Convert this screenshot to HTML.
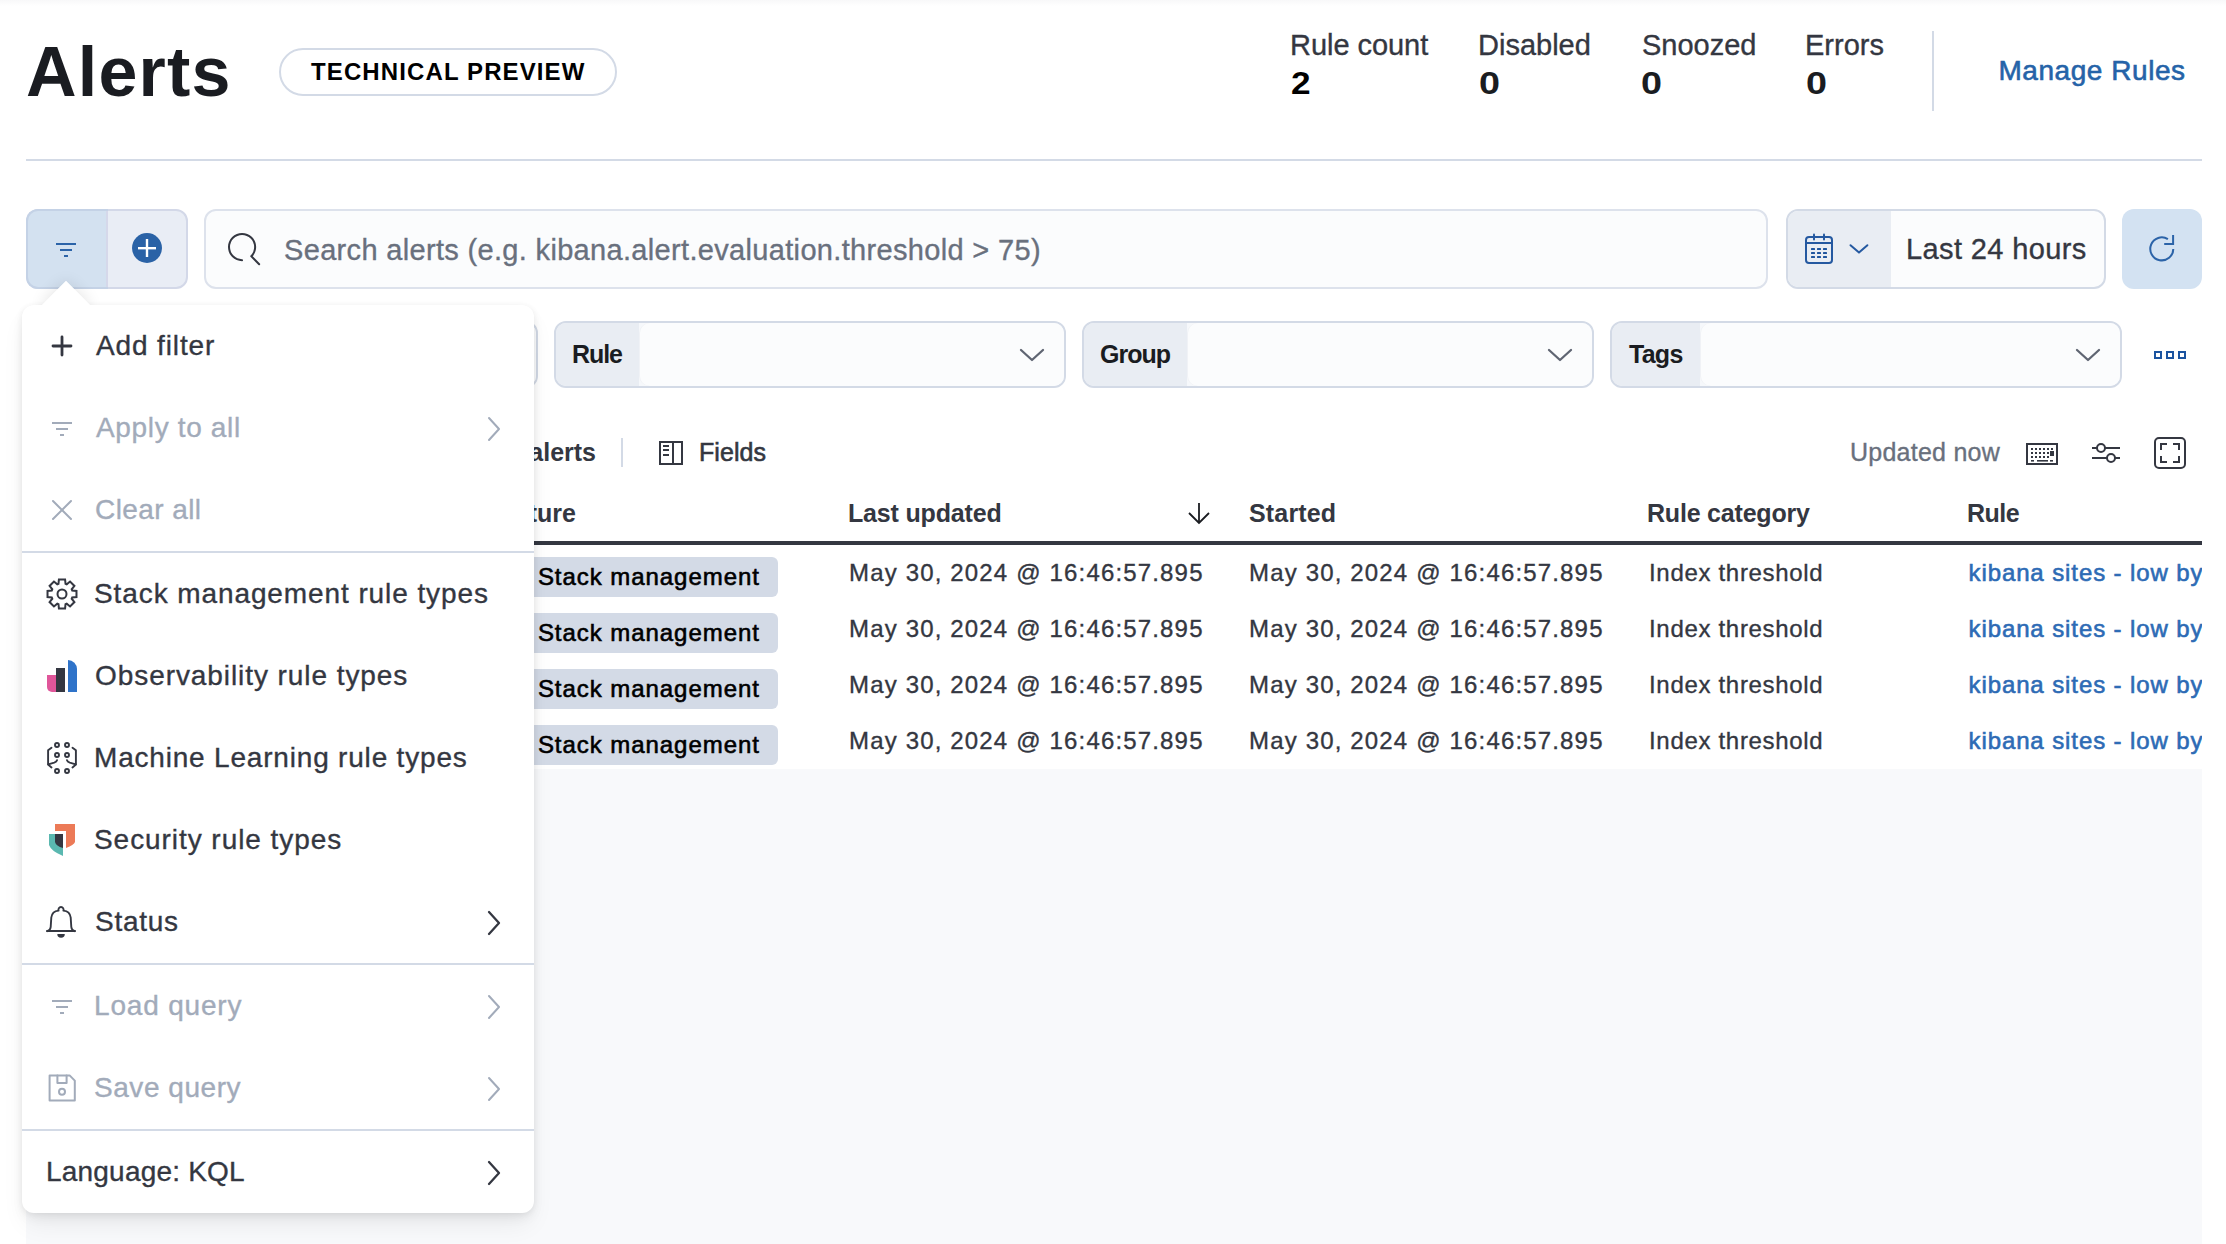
<!DOCTYPE html>
<html><head><meta charset="utf-8">
<style>
html,body{margin:0;padding:0;background:#fff;}
body{width:2226px;height:1244px;position:relative;overflow:hidden;font-family:"Liberation Sans",sans-serif;}
.t{position:absolute;line-height:1;white-space:nowrap;}
.a{position:absolute;box-sizing:border-box;}
svg{position:absolute;overflow:visible;}
</style></head><body>
<!-- top hairline shadow -->
<div class="a" style="left:0;top:0;width:2226px;height:6px;background:linear-gradient(#f8f8f9,#fff);"></div>
<!-- header -->
<div class="a" style="left:279px;top:48px;width:338px;height:48px;border:2px solid #d3dae6;border-radius:24px;"></div>
<div class="a" style="left:1932px;top:31px;width:2px;height:80px;background:#d3dae6;"></div>
<div class="a" style="left:26px;top:159px;width:2176px;height:2px;background:#d3dae6;"></div>

<!-- toolbar: filter button group -->
<div class="a" style="left:26px;top:209px;width:162px;height:80px;border:2px solid #d3d8e8;border-radius:12px;background:#e9edf5;"></div>
<div class="a" style="left:26px;top:209px;width:82px;height:80px;border:2px solid #c4d2e6;border-right:none;border-radius:12px 0 0 12px;background:#d3e1f0;"></div>
<div class="a" style="left:106px;top:211px;width:2px;height:76px;background:#d5d8ea;"></div>
<svg style="left:0;top:0" width="1" height="1">
  <rect x="56" y="243" width="20" height="2" fill="#2b63a8"/>
  <rect x="60" y="249" width="12" height="2" fill="#2b63a8"/>
  <rect x="64" y="255" width="4" height="2" fill="#2b63a8"/>
  <circle cx="147" cy="248" r="15" fill="#2a62a6"/>
  <rect x="138" y="247" width="18" height="2.4" fill="#fff"/>
  <rect x="145.8" y="239" width="2.4" height="18" fill="#fff"/>
</svg>

<!-- search -->
<div class="a" style="left:204px;top:209px;width:1564px;height:80px;border:2px solid #dde2ec;border-radius:12px;background:#fbfcfd;"></div>
<svg style="left:227.5px;top:233px" width="32.2" height="32.2" viewBox="0 0 16 16"><path fill="#343741" d="M11.271 11.978l3.872 3.873a.502.502 0 0 0 .708 0 .502.502 0 0 0 0-.708l-3.565-3.564c2.38-2.747 2.267-6.923-.342-9.532-2.73-2.73-7.17-2.73-9.898 0-2.728 2.729-2.728 7.17 0 9.9a6.955 6.955 0 0 0 4.949 2.05.5.5 0 0 0 0-1 5.96 5.96 0 0 1-4.242-1.757 6.01 6.01 0 0 1 0-8.486c2.337-2.34 6.143-2.34 8.484 0a6.01 6.01 0 0 1 0 8.486.5.5 0 0 0 .034.738z"/></svg>

<!-- date picker -->
<div class="a" style="left:1786px;top:209px;width:320px;height:80px;border:2px solid #d3dae6;border-radius:12px;background:#fbfcfd;overflow:hidden;">
  <div class="a" style="left:0;top:0;width:103px;height:76px;background:#e9edf3;"></div>
</div>
<svg style="left:0;top:0" width="1" height="1">
  <g fill="none" stroke="#2559a0" stroke-width="2" stroke-linecap="round">
    <rect x="1806" y="237" width="26" height="26" rx="3"/>
    <line x1="1806" y1="243" x2="1832" y2="243"/>
    <line x1="1814" y1="234.5" x2="1814" y2="239.5"/>
    <line x1="1824" y1="234.5" x2="1824" y2="239.5"/>
    <polyline stroke-linejoin="round" points="1850.5,245.2 1859,252.6 1867.4,245.2"/>
  </g>
  <g fill="#1f559e">
    <rect x="1811" y="248" width="4" height="2" rx="0.5"/><rect x="1817" y="248" width="4" height="2" rx="0.5"/><rect x="1823" y="248" width="4" height="2" rx="0.5"/>
    <rect x="1811" y="252" width="4" height="2" rx="0.5"/><rect x="1817" y="252" width="4" height="2" rx="0.5"/><rect x="1823" y="252" width="4" height="2" rx="0.5"/>
    <rect x="1811" y="256" width="4" height="2" rx="0.5"/><rect x="1817" y="256" width="4" height="2" rx="0.5"/><rect x="1823" y="256" width="4" height="2" rx="0.5"/>
  </g>
</svg>
<!-- refresh -->
<div class="a" style="left:2122px;top:209px;width:80px;height:80px;border-radius:12px;background:#d3e2f2;"></div>
<svg style="left:0;top:0" width="1" height="1">
  <g fill="none" stroke="#2b63a8" stroke-width="2">
    <path d="M2167.9 239.1 A11.5 11.5 0 1 0 2173.3 248.9"/>
    <polyline points="2173.1,235 2173.1,244.1 2164.2,244.1"/>
  </g>
</svg>

<!-- filter controls -->
<div class="a" style="left:26px;top:321px;width:512px;height:67px;border:2px solid #d3dae6;border-radius:12px;background:#f6f8fb;overflow:hidden;"><div class="a" style="left:0;top:0;width:100px;bottom:0;background:#e9edf3;"></div><div class="a" style="left:100px;top:0;right:0;bottom:0;background:#fbfcfd;border-radius:10px 0 0 10px;box-shadow:inset 1px 0 0 #f0f2f6;"></div></div>
<div class="a" style="left:554px;top:321px;width:512px;height:67px;border:2px solid #d3dae6;border-radius:12px;background:#f6f8fb;overflow:hidden;"><div class="a" style="left:0;top:0;width:83px;bottom:0;background:#e9edf3;"></div><div class="a" style="left:83px;top:0;right:0;bottom:0;background:#fbfcfd;border-radius:10px 0 0 10px;box-shadow:inset 1px 0 0 #f0f2f6;"></div></div>
<div class="a" style="left:1082px;top:321px;width:512px;height:67px;border:2px solid #d3dae6;border-radius:12px;background:#f6f8fb;overflow:hidden;"><div class="a" style="left:0;top:0;width:103px;bottom:0;background:#e9edf3;"></div><div class="a" style="left:103px;top:0;right:0;bottom:0;background:#fbfcfd;border-radius:10px 0 0 10px;box-shadow:inset 1px 0 0 #f0f2f6;"></div></div>
<div class="a" style="left:1610px;top:321px;width:512px;height:67px;border:2px solid #d3dae6;border-radius:12px;background:#f6f8fb;overflow:hidden;"><div class="a" style="left:0;top:0;width:88px;bottom:0;background:#e9edf3;"></div><div class="a" style="left:88px;top:0;right:0;bottom:0;background:#fbfcfd;border-radius:10px 0 0 10px;box-shadow:inset 1px 0 0 #f0f2f6;"></div></div>
<svg style="left:0;top:0" width="1" height="1">
  <g fill="none" stroke="#5f6572" stroke-width="2.3" stroke-linecap="round" stroke-linejoin="round">
    <polyline points="1021,350 1032,360 1043,350"/>
    <polyline points="1549,350 1560,360 1571,350"/>
    <polyline points="2077,350 2088,360 2099,350"/>
  </g>
  <g fill="none" stroke="#1b54a0" stroke-width="2">
    <rect x="2155" y="352" width="6" height="6"/>
    <rect x="2167" y="352" width="6" height="6"/>
    <rect x="2179" y="352" width="6" height="6"/>
  </g>
</svg>

<!-- grid toolbar -->
<div class="a" style="left:621px;top:438px;width:2px;height:29px;background:#d3dae6;"></div>
<svg style="left:0;top:0" width="1" height="1">
  <g fill="none" stroke="#343741" stroke-width="2">
    <rect x="660" y="442" width="22" height="22"/>
    <line x1="673" y1="442" x2="673" y2="464"/>
    <line x1="663" y1="446" x2="669" y2="446"/>
    <line x1="663" y1="450" x2="669" y2="450"/>
    <line x1="663" y1="455" x2="669" y2="455"/>
    <!-- keyboard -->
    <rect x="2027" y="444" width="30" height="20"/>
    <!-- sliders -->
    <line x1="2092" y1="448" x2="2097" y2="448"/><line x1="2105" y1="448" x2="2120" y2="448"/>
    <circle cx="2101" cy="448" r="4"/>
    <line x1="2092" y1="458" x2="2107" y2="458"/><line x1="2115" y1="458" x2="2120" y2="458"/>
    <circle cx="2111" cy="458" r="4"/>
    <!-- fullscreen -->
    <rect x="2155" y="438" width="30" height="30" rx="4"/>
    <polyline points="2161,450 2161,444 2167,444"/>
    <polyline points="2173,444 2179,444 2179,450"/>
    <polyline points="2161,456 2161,462 2167,462"/>
    <polyline points="2173,462 2179,462 2179,456"/>
  </g>
  <g fill="#343741">
    <rect x="2031" y="448" width="2" height="2"/><rect x="2035" y="448" width="2" height="2"/><rect x="2039" y="448" width="2" height="2"/><rect x="2043" y="448" width="2" height="2"/><rect x="2047" y="448" width="2" height="2"/><rect x="2051" y="448" width="2" height="2"/>
    <rect x="2031" y="452" width="2" height="2"/><rect x="2035" y="452" width="2" height="2"/><rect x="2039" y="452" width="2" height="2"/><rect x="2043" y="452" width="2" height="2"/><rect x="2047" y="452" width="2" height="2"/><rect x="2050" y="451" width="4" height="5"/>
    <rect x="2031" y="456" width="2" height="2"/><rect x="2035" y="456" width="2" height="2"/><rect x="2039" y="456" width="2" height="2"/><rect x="2043" y="456" width="2" height="2"/><rect x="2047" y="456" width="2" height="2"/>
    <rect x="2031" y="460" width="3" height="1.6"/><rect x="2037" y="460" width="11" height="1.6"/><rect x="2050" y="460" width="3" height="1.6"/>
  </g>
</svg>

<!-- header row -->
<svg style="left:0;top:0" width="1" height="1">
  <g fill="none" stroke="#1a1c21" stroke-width="1.8">
    <line x1="1199" y1="503" x2="1199" y2="522"/>
    <polyline points="1189,513 1199,523 1209,513"/>
  </g>
</svg>
<div class="a" style="left:26px;top:541px;width:2176px;height:4px;background:#343741;"></div>

<!-- badges -->
<div class="a" style="left:520px;top:557px;width:258px;height:40px;border-radius:6px;background:#d3dae6;"></div>
<div class="a" style="left:520px;top:613px;width:258px;height:40px;border-radius:6px;background:#d3dae6;"></div>
<div class="a" style="left:520px;top:669px;width:258px;height:40px;border-radius:6px;background:#d3dae6;"></div>
<div class="a" style="left:520px;top:725px;width:258px;height:40px;border-radius:6px;background:#d3dae6;"></div>

<!-- link cells -->
<div class="a" style="left:1960px;top:545px;width:242px;height:224px;overflow:hidden;">
  <div class="t" style="left:8.5px;top:16.1px;font-size:24px;font-weight:400;-webkit-text-stroke:0.6px #2d6bb5;letter-spacing:0.9px;color:#2d6bb5;">kibana sites - low bytes</div>
  <div class="t" style="left:8.5px;top:72.1px;font-size:24px;font-weight:400;-webkit-text-stroke:0.6px #2d6bb5;letter-spacing:0.9px;color:#2d6bb5;">kibana sites - low bytes</div>
  <div class="t" style="left:8.5px;top:128.1px;font-size:24px;font-weight:400;-webkit-text-stroke:0.6px #2d6bb5;letter-spacing:0.9px;color:#2d6bb5;">kibana sites - low bytes</div>
  <div class="t" style="left:8.5px;top:184.1px;font-size:24px;font-weight:400;-webkit-text-stroke:0.6px #2d6bb5;letter-spacing:0.9px;color:#2d6bb5;">kibana sites - low bytes</div>
</div>

<!-- empty grid area -->
<div class="a" style="left:26px;top:769px;width:2176px;height:475px;background:#f8f9fb;"></div>

<div class="t" id="t0" style="top:36.7px;font-size:70px;font-weight:700;color:#1a1c21;letter-spacing:1.200px;left:26.0px;">Alerts</div>
<div class="t" id="t1" style="top:59.7px;font-size:24px;font-weight:700;color:#000000;letter-spacing:1.112px;left:311.0px;">TECHNICAL PREVIEW</div>
<div class="t" id="t2" style="top:30.7px;font-size:29px;font-weight:400;-webkit-text-stroke:0.35px #343741;color:#343741;letter-spacing:-0.044px;left:1290.0px;">Rule count</div>
<div class="t" id="t3" style="top:30.7px;font-size:29px;font-weight:400;-webkit-text-stroke:0.35px #343741;color:#343741;left:1478.0px;">Disabled</div>
<div class="t" id="t4" style="top:30.7px;font-size:29px;font-weight:400;-webkit-text-stroke:0.35px #343741;color:#343741;left:1642.0px;">Snoozed</div>
<div class="t" id="t5" style="top:30.7px;font-size:29px;font-weight:400;-webkit-text-stroke:0.35px #343741;color:#343741;left:1805.0px;">Errors</div>
<div class="t" id="t6" style="top:66.6px;font-size:32px;font-weight:700;color:#000000;left:1291.0px;transform:scaleX(1.1);transform-origin:left;">2</div>
<div class="t" id="t7" style="top:66.6px;font-size:32px;font-weight:700;color:#1a1c21;left:1479.0px;transform:scaleX(1.18);transform-origin:left;">0</div>
<div class="t" id="t8" style="top:66.6px;font-size:32px;font-weight:700;color:#1a1c21;left:1641.0px;transform:scaleX(1.18);transform-origin:left;">0</div>
<div class="t" id="t9" style="top:66.6px;font-size:32px;font-weight:700;color:#1a1c21;left:1806.0px;transform:scaleX(1.18);transform-origin:left;">0</div>
<div class="t" id="t10" style="top:57.3px;font-size:28px;font-weight:400;-webkit-text-stroke:0.6px #2563a8;color:#2563a8;letter-spacing:0.545px;left:1998.5px;">Manage Rules</div>
<div class="t" id="t11" style="top:235.5px;font-size:29px;font-weight:400;-webkit-text-stroke:0.35px #69707d;color:#69707d;letter-spacing:0.328px;left:284.0px;">Search alerts (e.g. kibana.alert.evaluation.threshold &gt; 75)</div>
<div class="t" id="t12" style="top:235.1px;font-size:29px;font-weight:400;-webkit-text-stroke:0.35px #343741;color:#343741;letter-spacing:0.383px;left:1906.0px;">Last 24 hours</div>
<div class="t" id="t13" style="top:342.1px;font-size:25px;font-weight:700;color:#1a1c21;left:45.0px;">Status</div>
<div class="t" id="t14" style="top:342.1px;font-size:25px;font-weight:700;color:#1a1c21;letter-spacing:-1.067px;left:572.0px;">Rule</div>
<div class="t" id="t15" style="top:342.1px;font-size:25px;font-weight:700;color:#1a1c21;letter-spacing:-1.000px;left:1100.0px;">Group</div>
<div class="t" id="t16" style="top:342.1px;font-size:25px;font-weight:700;color:#1a1c21;letter-spacing:-0.733px;left:1629.0px;">Tags</div>
<div class="t" id="t17" style="top:439.8px;font-size:25px;font-weight:700;color:#343741;right:1630.0px;">4 alerts</div>
<div class="t" id="t18" style="top:439.8px;font-size:25px;font-weight:400;-webkit-text-stroke:0.6px #343741;color:#343741;letter-spacing:0.080px;left:699.0px;">Fields</div>
<div class="t" id="t19" style="top:439.5px;font-size:25px;font-weight:400;-webkit-text-stroke:0.35px #69707d;color:#69707d;letter-spacing:0.240px;left:1850.0px;">Updated now</div>
<div class="t" id="t20" style="top:500.8px;font-size:25px;font-weight:700;color:#343741;right:1650.0px;">Feature</div>
<div class="t" id="t21" style="top:500.8px;font-size:25px;font-weight:700;color:#343741;letter-spacing:-0.173px;left:848.0px;">Last updated</div>
<div class="t" id="t22" style="top:500.8px;font-size:25px;font-weight:700;color:#343741;letter-spacing:0.167px;left:1249.0px;">Started</div>
<div class="t" id="t23" style="top:500.8px;font-size:25px;font-weight:700;color:#343741;letter-spacing:-0.200px;left:1647.0px;">Rule category</div>
<div class="t" id="t24" style="top:500.8px;font-size:25px;font-weight:700;color:#343741;letter-spacing:-0.500px;left:1967.0px;">Rule</div>
<div class="t" id="t25" style="top:560.9px;font-size:24px;font-weight:400;-webkit-text-stroke:0.35px #343741;color:#343741;letter-spacing:1.162px;left:849.0px;">May 30, 2024 @ 16:46:57.895</div>
<div class="t" id="t26" style="top:560.9px;font-size:24px;font-weight:400;-webkit-text-stroke:0.35px #343741;color:#343741;letter-spacing:1.162px;left:1249.0px;">May 30, 2024 @ 16:46:57.895</div>
<div class="t" id="t27" style="top:560.9px;font-size:24px;font-weight:400;-webkit-text-stroke:0.35px #343741;color:#343741;letter-spacing:0.686px;left:1649.0px;">Index threshold</div>
<div class="t" id="t28" style="top:564.7px;font-size:24px;font-weight:400;-webkit-text-stroke:0.6px #000000;color:#000000;left:537.9px;letter-spacing:0.95px;">Stack management</div>
<div class="t" id="t29" style="top:616.9px;font-size:24px;font-weight:400;-webkit-text-stroke:0.35px #343741;color:#343741;letter-spacing:1.162px;left:849.0px;">May 30, 2024 @ 16:46:57.895</div>
<div class="t" id="t30" style="top:616.9px;font-size:24px;font-weight:400;-webkit-text-stroke:0.35px #343741;color:#343741;letter-spacing:1.162px;left:1249.0px;">May 30, 2024 @ 16:46:57.895</div>
<div class="t" id="t31" style="top:616.9px;font-size:24px;font-weight:400;-webkit-text-stroke:0.35px #343741;color:#343741;letter-spacing:0.686px;left:1649.0px;">Index threshold</div>
<div class="t" id="t32" style="top:620.7px;font-size:24px;font-weight:400;-webkit-text-stroke:0.6px #000000;color:#000000;left:537.9px;letter-spacing:0.95px;">Stack management</div>
<div class="t" id="t33" style="top:672.9px;font-size:24px;font-weight:400;-webkit-text-stroke:0.35px #343741;color:#343741;letter-spacing:1.162px;left:849.0px;">May 30, 2024 @ 16:46:57.895</div>
<div class="t" id="t34" style="top:672.9px;font-size:24px;font-weight:400;-webkit-text-stroke:0.35px #343741;color:#343741;letter-spacing:1.162px;left:1249.0px;">May 30, 2024 @ 16:46:57.895</div>
<div class="t" id="t35" style="top:672.9px;font-size:24px;font-weight:400;-webkit-text-stroke:0.35px #343741;color:#343741;letter-spacing:0.686px;left:1649.0px;">Index threshold</div>
<div class="t" id="t36" style="top:676.7px;font-size:24px;font-weight:400;-webkit-text-stroke:0.6px #000000;color:#000000;left:537.9px;letter-spacing:0.95px;">Stack management</div>
<div class="t" id="t37" style="top:728.9px;font-size:24px;font-weight:400;-webkit-text-stroke:0.35px #343741;color:#343741;letter-spacing:1.162px;left:849.0px;">May 30, 2024 @ 16:46:57.895</div>
<div class="t" id="t38" style="top:728.9px;font-size:24px;font-weight:400;-webkit-text-stroke:0.35px #343741;color:#343741;letter-spacing:1.162px;left:1249.0px;">May 30, 2024 @ 16:46:57.895</div>
<div class="t" id="t39" style="top:728.9px;font-size:24px;font-weight:400;-webkit-text-stroke:0.35px #343741;color:#343741;letter-spacing:0.686px;left:1649.0px;">Index threshold</div>
<div class="t" id="t40" style="top:732.7px;font-size:24px;font-weight:400;-webkit-text-stroke:0.6px #000000;color:#000000;left:537.9px;letter-spacing:0.95px;">Stack management</div>

<!-- popover -->
<div class="a" style="left:49px;top:288px;width:34px;height:34px;transform:rotate(45deg);background:#fff;box-shadow:0 0 16px rgba(0,0,0,0.12);"></div>
<div class="a" style="left:22px;top:305px;width:512px;height:908px;background:#fff;border-radius:12px;box-shadow:0 1px 6px rgba(0,0,0,0.06),0 5px 12px rgba(0,0,0,0.05),0 14px 26px -4px rgba(0,0,0,0.07);"></div>
<svg style="left:0;top:0" width="1" height="1">
  <polygon points="41,306 66,281 91,306" fill="#fff"/>
</svg>
<div class="a" style="left:22px;top:551px;width:512px;height:2px;background:#d3dae6;"></div>
<div class="a" style="left:22px;top:963px;width:512px;height:2px;background:#d3dae6;"></div>
<div class="a" style="left:22px;top:1129px;width:512px;height:2px;background:#d3dae6;"></div>
<svg style="left:0;top:0" width="1" height="1">
  <!-- plus -->
  <g stroke="#343741" stroke-width="2.4" fill="none">
    <line x1="53" y1="346" x2="71" y2="346" stroke-linecap="round" stroke-width="2.8"/><line x1="62" y1="337" x2="62" y2="355" stroke-linecap="round" stroke-width="2.8"/>
  </g>
  <!-- filter disabled -->
  <g fill="#a2abba">
    <rect x="52" y="422" width="20" height="2"/><rect x="56" y="428" width="12" height="2"/><rect x="60" y="434" width="4" height="2"/>
    <rect x="52" y="1000" width="20" height="2"/><rect x="56" y="1006" width="12" height="2"/><rect x="60" y="1012" width="4" height="2"/>
  </g>
  <g stroke="#a2abba" stroke-width="2" fill="none" stroke-linecap="round" stroke-linejoin="round">
    <line x1="53" y1="501" x2="71" y2="519"/><line x1="71" y1="501" x2="53" y2="519"/>
    <polyline points="489,418 499,429 489,440"/>
    <polyline points="489,996 499,1007 489,1018"/>
    <polyline points="489,1078 499,1089 489,1100"/>
    <!-- floppy -->
    <path stroke-linejoin="round" d="M49.6 1075.4 H69.6 L74.8 1080.6 V1100.6 H49.6 Z"/>
    <path stroke-linejoin="round" d="M57.4 1075.4 V1083 H66.6 V1075.4"/>
    <circle cx="62" cy="1091.8" r="3"/>
  </g>
  <g stroke="#343741" stroke-width="2.3" fill="none" stroke-linecap="round" stroke-linejoin="round">
    <polyline points="489,912 499,923 489,934"/>
    <polyline points="489,1162 499,1173 489,1184"/>
  </g>
  <!-- gear -->
  <g stroke="#343741" stroke-width="2" fill="none">
    <path id="gear" stroke-linejoin="miter" d="M58.48 583.79 L58.92 579.52 L65.08 579.52 L65.52 583.79 L66.73 584.29 L70.06 581.59 L74.41 585.94 L71.71 589.27 L72.21 590.48 L76.48 590.92 L76.48 597.08 L72.21 597.52 L71.71 598.73 L74.41 602.06 L70.06 606.41 L66.73 603.71 L65.52 604.21 L65.08 608.48 L58.92 608.48 L58.48 604.21 L57.27 603.71 L53.94 606.41 L49.59 602.06 L52.29 598.73 L51.79 597.52 L47.52 597.08 L47.52 590.92 L51.79 590.48 L52.29 589.27 L49.59 585.94 L53.94 581.59 L57.27 584.29 Z"/>
    <circle cx="62" cy="594" r="4.5"/>
  </g>
  <!-- observability -->
  <path d="M47 675 h9 v17 h-4 a5 5 0 0 1 -5 -5 z" fill="#e0569a"/>
  <rect x="56" y="668" width="9" height="24" fill="#343741"/>
  <path d="M68 660 a9 9 0 0 1 9 9 v23 h-9 z" fill="#2f73c9"/>
  <!-- ML -->
  <g stroke="#343741" stroke-width="1.9" fill="none" stroke-linecap="round" stroke-linejoin="round">
    <circle cx="57" cy="745" r="2"/><circle cx="67" cy="745" r="2"/>
    <circle cx="57" cy="755" r="2"/><circle cx="67" cy="755" r="2"/>
    <circle cx="57" cy="771" r="2"/><circle cx="67" cy="771" r="2"/>
    <path d="M51.5 747.8 L48.1 750.3 V764.6 L51.5 767.4"/>
    <path d="M48.3 764.4 L54.2 762.6 Q56.6 761.8 57 760.2"/>
    <path d="M72.5 747.8 L75.9 750.3 V764.6 L72.5 767.4"/>
    <path d="M75.7 764.4 L69.8 762.6 Q67.4 761.8 67 760.2"/>
  </g>
  <!-- security -->
  <path d="M55 824 H75 V842 Q74 845 66 848 V831 H55 Z" fill="#ec7a57"/>
  <path d="M49 834 H63 V856 Q51 851 49 845 Z" fill="#5ab8b0"/>
  <path d="M55 834 H63 V848 Q56 846 55 842 Z" fill="#343741"/>
  <!-- bell -->
  <g stroke="#343741" stroke-width="1.9" fill="none" stroke-linecap="round" stroke-linejoin="round">
    <path d="M47 931 H75"/>
    <path d="M47.3 931.2 Q50.4 930.2 50.7 927 L51.3 917.5 Q52 911.3 58.6 910.6 A2.6 2.6 0 1 1 63.4 910.6 Q70 911.3 70.7 917.5 L71.3 927 Q71.6 930.2 74.7 931.2"/>
  </g>
  <path d="M57.3 934 H64.8 A3.75 3.75 0 0 1 57.3 934 Z" fill="#343741"/>
</svg>
<div class="t" id="t41" style="top:332.3px;font-size:28px;font-weight:400;-webkit-text-stroke:0.35px #343741;color:#343741;letter-spacing:0.878px;left:96.0px;">Add filter</div>
<div class="t" id="t42" style="top:414.3px;font-size:28px;font-weight:400;-webkit-text-stroke:0.35px #a2abba;color:#a2abba;letter-spacing:0.655px;left:96.0px;">Apply to all</div>
<div class="t" id="t43" style="top:496.3px;font-size:28px;font-weight:400;-webkit-text-stroke:0.35px #a2abba;color:#a2abba;letter-spacing:0.413px;left:95.0px;">Clear all</div>
<div class="t" id="t44" style="top:580.3px;font-size:28px;font-weight:400;-webkit-text-stroke:0.35px #343741;color:#343741;letter-spacing:0.904px;left:94.0px;">Stack management rule types</div>
<div class="t" id="t45" style="top:662.3px;font-size:28px;font-weight:400;-webkit-text-stroke:0.35px #343741;color:#343741;letter-spacing:0.926px;left:95.0px;">Observability rule types</div>
<div class="t" id="t46" style="top:744.3px;font-size:28px;font-weight:400;-webkit-text-stroke:0.35px #343741;color:#343741;letter-spacing:0.808px;left:94.0px;">Machine Learning rule types</div>
<div class="t" id="t47" style="top:826.3px;font-size:28px;font-weight:400;-webkit-text-stroke:0.35px #343741;color:#343741;letter-spacing:0.939px;left:94.0px;">Security rule types</div>
<div class="t" id="t48" style="top:908.3px;font-size:28px;font-weight:400;-webkit-text-stroke:0.35px #343741;color:#343741;letter-spacing:0.740px;left:95.0px;">Status</div>
<div class="t" id="t49" style="top:992.3px;font-size:28px;font-weight:400;-webkit-text-stroke:0.35px #a2abba;color:#a2abba;letter-spacing:0.822px;left:94.0px;">Load query</div>
<div class="t" id="t50" style="top:1074.3px;font-size:28px;font-weight:400;-webkit-text-stroke:0.35px #a2abba;color:#a2abba;letter-spacing:0.544px;left:94.0px;">Save query</div>
<div class="t" id="t51" style="top:1158.3px;font-size:28px;font-weight:400;-webkit-text-stroke:0.35px #343741;color:#343741;letter-spacing:0.208px;left:46.0px;">Language: KQL</div>
</body></html>
